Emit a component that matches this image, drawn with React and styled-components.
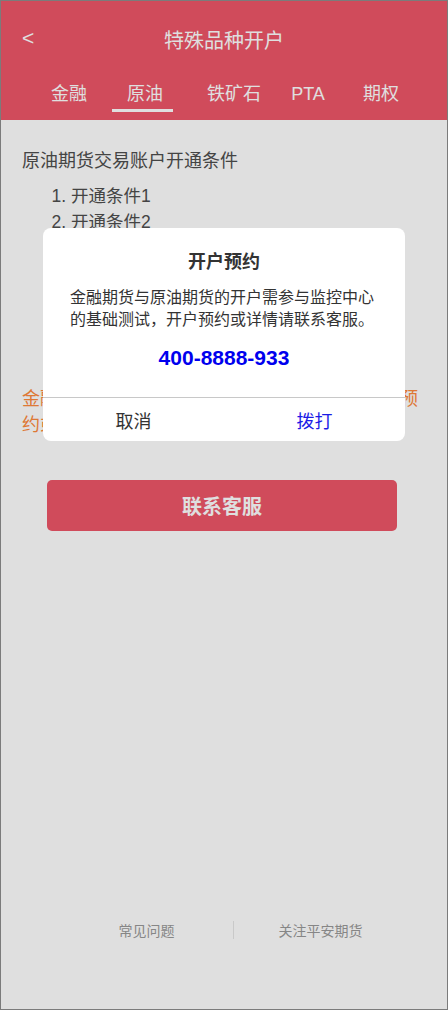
import styled, { createGlobalStyle } from 'styled-components';

const GlobalStyle = createGlobalStyle`
  html, body {
    margin: 0;
    padding: 0;
    background: #fff;
  }
  body {
    font-family: "Liberation Sans", "Noto Sans CJK SC", sans-serif;
  }
`;

const tabs = ['金融', '原油', '铁矿石', 'PTA', '期权'];

function App() {
  return (
    <StPage>
      <GlobalStyle />
      <StHeader>
        <StTitleBar>
          <StBack>&lt;</StBack>
          <StTitle>特殊品种开户</StTitle>
        </StTitleBar>
        <StTabs>
          {tabs.map((t) => (
            <StTab key={t} $active={t === '原油'}>
              <span>{t}</span>
            </StTab>
          ))}
        </StTabs>
      </StHeader>

      <StContent>
        <StSection>原油期货交易账户开通条件</StSection>
        <StList>
          <li>开通条件1</li>
          <li>开通条件2</li>
        </StList>
        <StNotice>金融原油期货开户需满足上述条件，可提前在线预约或联系客服咨询。</StNotice>
        <StButton>联系客服</StButton>
      </StContent>

      <StFooter>
        <StFooterLink>常见问题</StFooterLink>
        <StFooterLine />
        <StFooterLink>关注平安期货</StFooterLink>
      </StFooter>

      <StMask />

      <StDialog>
        <StDialogTitle>开户预约</StDialogTitle>
        <StDialogText>金融期货与原油期货的开户需参与监控中心的基础测试，开户预约或详情请联系客服。</StDialogText>
        <StPhone>400-8888-933</StPhone>
        <StDialogActions>
          <StAction>取消</StAction>
          <StAction $primary>拨打</StAction>
        </StDialogActions>
      </StDialog>
    </StPage>
  );
}

export default App;

const StPage = styled.div`
  position: relative;
  width: 448px;
  height: 1010px;
  box-sizing: border-box;
  border: 1px solid #7b7b7b;
  display: flex;
  flex-direction: column;
  background: #fff;
  overflow: hidden;
`;

const StHeader = styled.div`
  background-color: #ee5668;
  color: #fff;
  margin: -1px -1px 0;
`;

const StTitleBar = styled.div`
  height: 77px;
  display: flex;
  align-items: center;
  justify-content: center;
  position: relative;
`;

const StBack = styled.span`
  position: absolute;
  left: 22px;
  top: 26px;
  font-size: 21px;
  line-height: 24px;
`;

const StTitle = styled.h1`
  margin: 2px 0 0;
  font-size: 20px;
  font-weight: normal;
`;

const StTabs = styled.div`
  height: 43px;
  display: grid;
  grid-template-columns: 76px 76px 102px 46px 100px;
  padding-left: 31px;
`;

const StTab = styled.div`
  display: flex;
  flex-direction: column;
  align-items: center;
  font-size: 18px;
  line-height: 22px;
  padding-top: 6px;

  &::after {
    content: '';
    width: 61px;
    height: 3px;
    margin-top: 4px;
    margin-left: -6px;
    background: ${({ $active }) => ($active ? '#fff' : 'transparent')};
  }
`;

const StContent = styled.div`
  padding: 28px 21px 0;
  display: flex;
  flex-direction: column;
  color: #4e4e4e;
`;

const StSection = styled.h2`
  margin: 0;
  font-size: 18px;
  font-weight: normal;
  line-height: 26px;
`;

const StList = styled.ol`
  margin: 9px 0 0;
  padding-left: 49px;
  font-size: 17.5px;
  line-height: 26px;
`;

const StNotice = styled.p`
  margin: 151px 0 0;
  color: #fe8a3d;
  font-size: 18px;
  line-height: 26px;
  width: 404px;
`;

const StButton = styled.button`
  margin: 42px 0 0 25px;
  width: 350px;
  height: 51px;
  border: none;
  border-radius: 5px;
  background-color: #ee5668;
  color: #fff;
  font-family: inherit;
  font-size: 20px;
  font-weight: bold;
`;

const StFooter = styled.div`
  margin-top: auto;
  padding: 0 0 69px 19px;
  display: flex;
  justify-content: center;
  align-items: center;
`;

const StFooterLink = styled.span`
  width: 173px;
  text-align: center;
  font-size: 14px;
  color: #9a9a9a;
`;

const StFooterLine = styled.span`
  width: 1px;
  height: 18px;
  background: #e6e6e6;
`;

const StMask = styled.div`
  position: absolute;
  inset: 0;
  background: rgba(0, 0, 0, 0.125);
`;

const StDialog = styled.div`
  position: absolute;
  left: 42px;
  top: 227px;
  width: 362px;
  background: #fff;
  border-radius: 8px;
  overflow: hidden;
  color: #333;
`;

const StDialogTitle = styled.h3`
  margin: 0;
  padding-top: 22px;
  text-align: center;
  font-size: 18px;
  line-height: 24px;
  font-weight: bold;
`;

const StDialogText = styled.p`
  margin: 13px 27px 0;
  font-size: 16px;
  line-height: 22px;
`;

const StPhone = styled.div`
  margin-top: 13px;
  text-align: center;
  font-size: 21px;
  line-height: 28px;
  font-weight: bold;
  color: #0000ee;
`;

const StDialogActions = styled.div`
  margin-top: 25px;
  border-top: 1px solid #c8c8c8;
  display: grid;
  grid-template-columns: 1fr 1fr;
  height: 43px;
`;

const StAction = styled.div`
  display: flex;
  align-items: center;
  justify-content: center;
  font-size: 18px;
  color: ${({ $primary }) => ($primary ? '#1b1be6' : '#333')};
`;
